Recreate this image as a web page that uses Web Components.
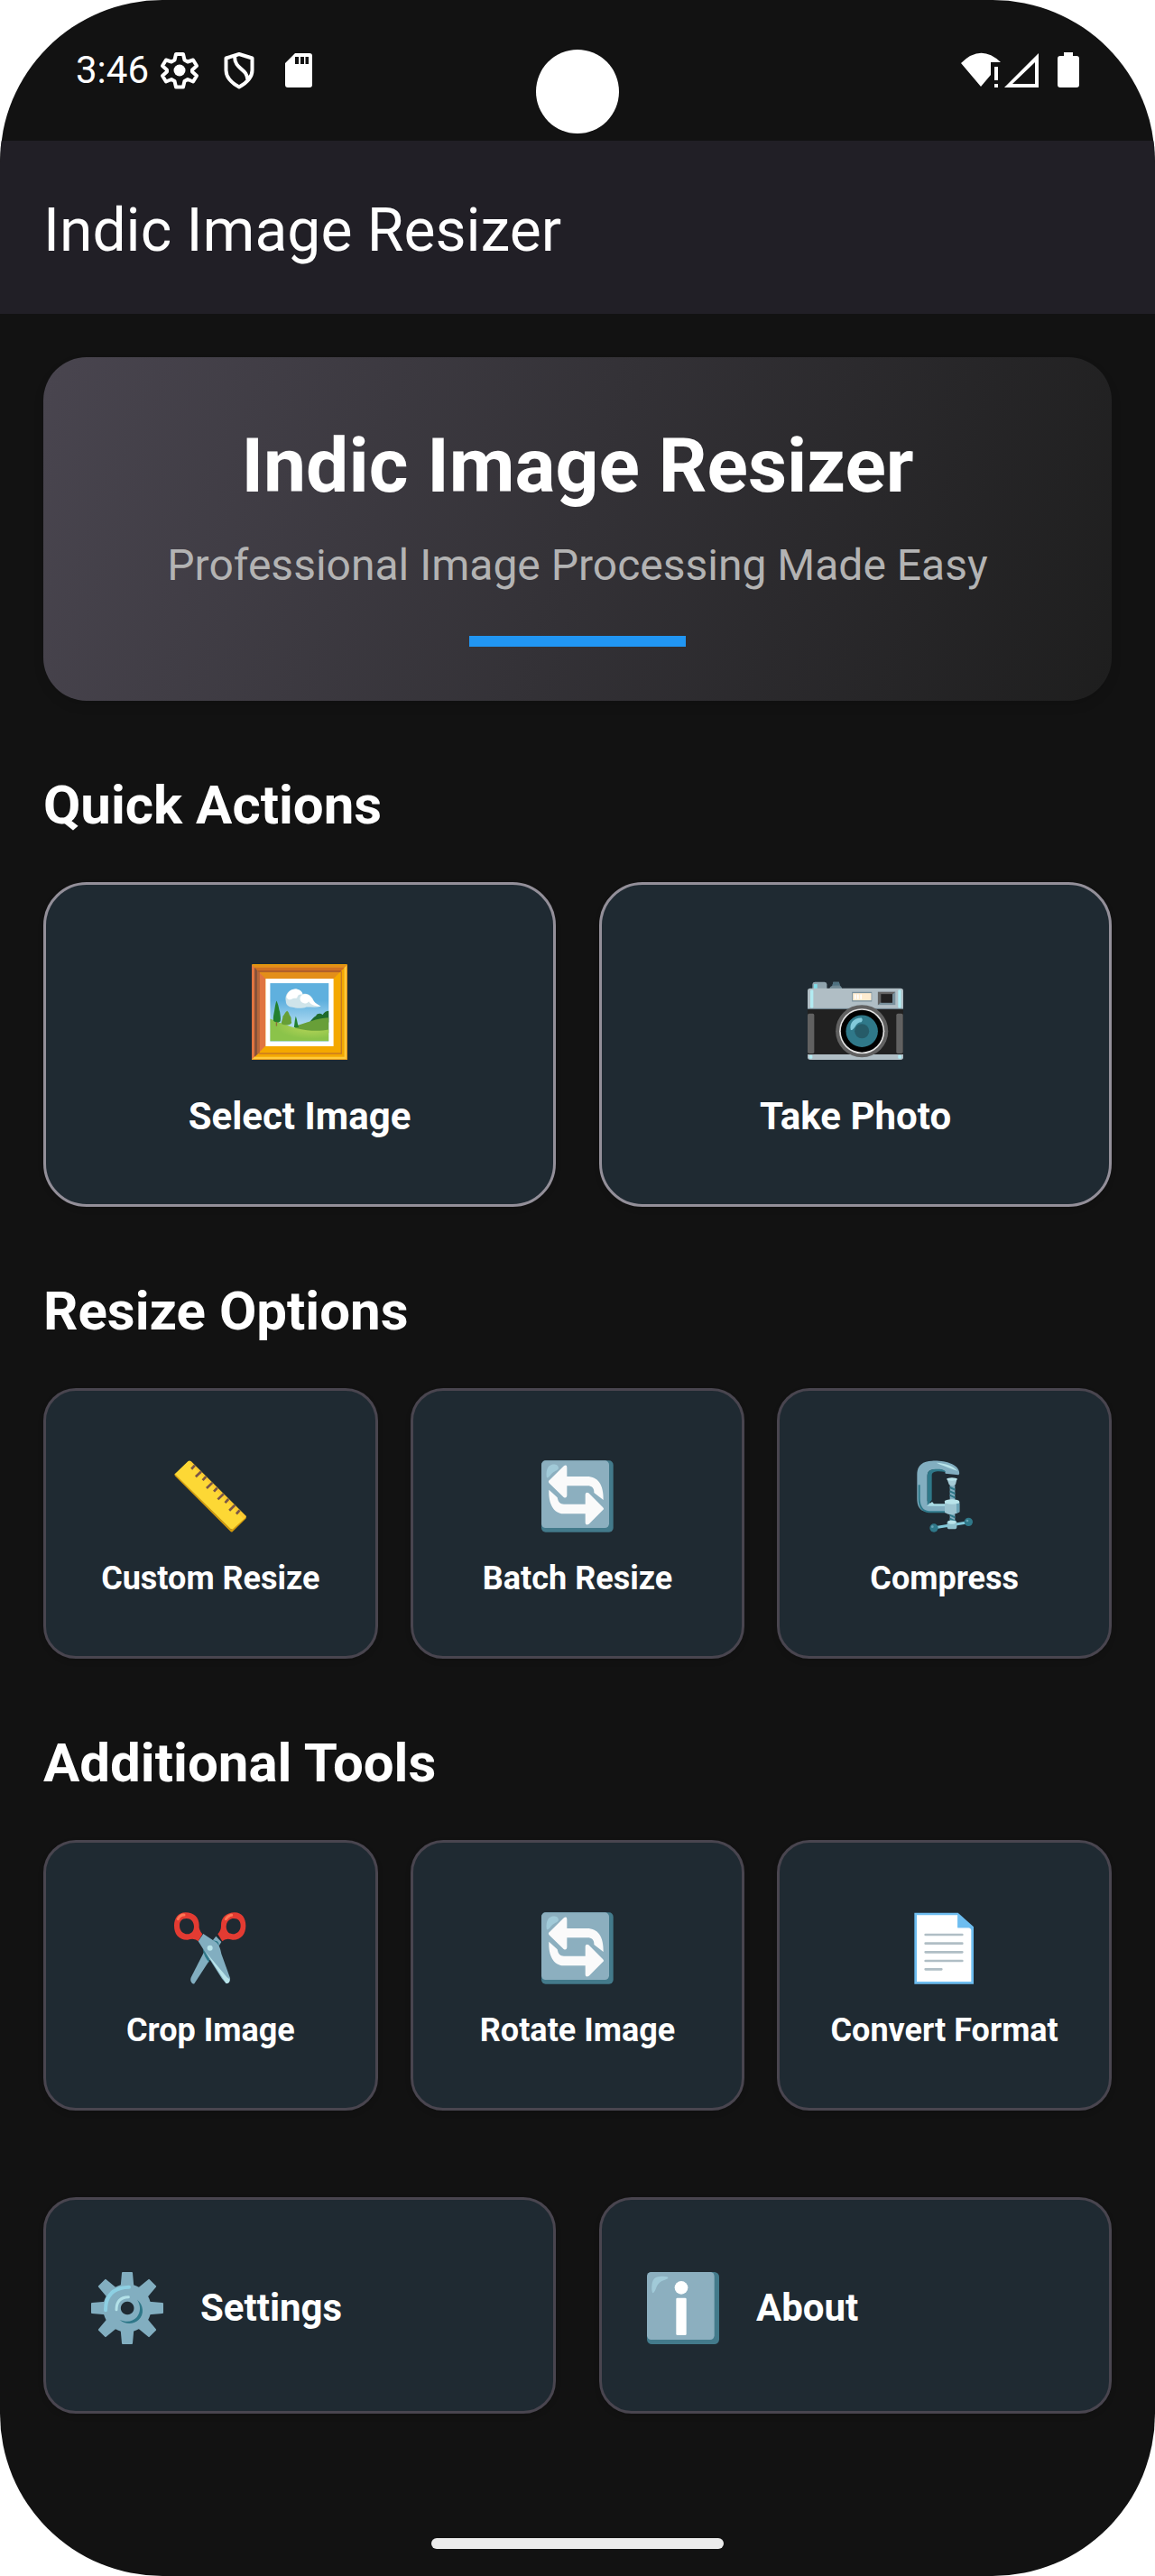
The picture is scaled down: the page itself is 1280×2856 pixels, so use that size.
<!DOCTYPE html>
<html lang="en">
<head>
<meta charset="utf-8">
<meta name="viewport" content="width=device-width, initial-scale=1">
<title>Indic Image Resizer</title>
<style>
  body { margin: 0; background: #fff; font-family: Roboto, "Liberation Sans", sans-serif; color: #fff; }
</style>
</head>
<body>
<phone-screen>
  <status-bar slot="status" time="3:46"></status-bar>
  <app-bar slot="bar">Indic Image Resizer</app-bar>
  <hero-card>
    <span slot="title">Indic Image Resizer</span>
    <span slot="subtitle">Professional Image Processing Made Easy</span>
  </hero-card>
  <tool-section columns="2" heading="Quick Actions">
    <tool-card size="large" icon="picture">Select Image</tool-card>
    <tool-card size="large" icon="camera">Take Photo</tool-card>
  </tool-section>
  <tool-section columns="3" heading="Resize Options">
    <tool-card icon="ruler">Custom Resize</tool-card>
    <tool-card icon="repeat">Batch Resize</tool-card>
    <tool-card icon="clamp">Compress</tool-card>
  </tool-section>
  <tool-section columns="3" heading="Additional Tools">
    <tool-card icon="scissors">Crop Image</tool-card>
    <tool-card icon="repeat">Rotate Image</tool-card>
    <tool-card icon="page">Convert Format</tool-card>
  </tool-section>
  <tool-section columns="2">
    <tool-card size="row" icon="gear">Settings</tool-card>
    <tool-card size="row" icon="info">About</tool-card>
  </tool-section>
</phone-screen>

<script>
const ICONS = {
  picture: `<svg viewBox="57 57 317 317">
    <defs>
      <linearGradient id="sky" x1="0" y1="0" x2="0" y2="1"><stop offset=".3" stop-color="#5fb0de"/><stop offset=".8" stop-color="#bfe3f6"/></linearGradient>
      <radialGradient id="lawn" cx=".7" cy=".3" r=".6"><stop offset="0" stop-color="#bcd759"/><stop offset="1" stop-color="#8bc34a"/></radialGradient>
    </defs>
    <rect x="57" y="57" width="317" height="317" rx="4" fill="#f4a800"/>
    <path d="M57 59H374L328 105H103Z" fill="#e38e19"/>
    <path d="M66 68H364L354 78H76Z" fill="#cf7022"/>
    <path d="M76 78H354L351 83H80Z" fill="#a9592c"/>
    <path d="M57 59L103 105V328L57 374Z" fill="#e07440"/>
    <path d="M66 68L82 84V349L66 365Z" fill="#87523a"/>
    <path d="M75 77L82 84V349L75 356Z" fill="#b5683a"/>
    <path d="M374 59L364 69V364H66L57 374H374Z" fill="#f3a51b"/>
    <path d="M373 59V374H57L66 364H364V69Z" fill="#ffcb3c"/>
    <path d="M372 60V373H58" fill="none" stroke="#e49318" stroke-width="3"/>
    <path d="M354 80V353H80" fill="none" stroke="#c97a22" stroke-width="4"/>
    <rect x="103" y="105" width="225" height="224" fill="#fff"/>
    <rect x="118" y="120" width="194" height="194" fill="url(#sky)"/>
    <path d="M170 180C165 158 180 140 201 139C216 139 224 147 226 156C244 150 258 164 262 178C268 190 280 192 286 197C268 202 250 198 238 199C222 206 200 202 192 200C178 198 171 192 170 180Z" fill="#cfe4ea"/>
    <path d="M172 166C176 146 190 138 204 139C218 142 226 150 225 158C216 155 210 158 208 166C206 174 196 166 191 172C186 176 176 176 172 166Z" fill="#fff"/>
    <path d="M217 174C216 160 228 154 240 157C252 160 258 172 262 179C270 190 280 192 286 197C262 196 250 188 246 180C240 190 220 190 217 174Z" fill="#fff"/>
    <path d="M248 250C256 240 262 232 270 228C274 218 288 220 292 225C296 216 306 212 312 212V250Z" fill="#1f6b2b"/>
    <path d="M200 262C240 252 270 236 312 234V285H200Z" fill="#689f38"/>
    <path d="M118 238C150 250 190 270 240 276C270 280 295 277 312 274V312H118Z" fill="url(#lawn)"/>
    <path d="M139 178C147 195 146 202 150 215C151 225 154 235 152 246C146 252 134 250 129 245C127 235 130 222 132 212C134 198 135 190 139 178Z" fill="#23802f"/>
    <path d="M137 248V262H141V248Z" fill="#8d6e3a"/>
    <path d="M174 212C182 218 180 224 184 228C190 236 186 240 189 250C188 262 160 260 155 254C156 244 160 238 160 230C166 224 166 218 174 212Z" fill="#679f36"/>
    <path d="M203 230C208 242 207 252 213 266L197 266C200 252 199 242 203 230Z" fill="#23802f"/>
  </svg>`,
  camera: `<svg viewBox="45 28 317 317">
    <path d="M61 110V94Q62 87 70 87H101Q109 88 109 95V110Z" fill="#90a4ae"/>
    <path d="M66 94H77V109H66Z" fill="#80deea"/>
    <path d="M117 110Q119 101 127 99L130 87H149L152 98Q158 102 160 110Z" fill="#6d8692"/><path d="M127 99L130 87H149L152 98Z" fill="#4f7180"/>
    <path d="M45 116Q45 108 54 108H353Q362 108 362 116V180H45Z" fill="#b0bec5"/>
    <path d="M45 325H362V337Q362 345 353 345H54Q45 345 45 337Z" fill="#b0bec5"/>
    <rect x="45" y="175" width="317" height="152" fill="#212121"/>
    <rect x="45" y="174" width="317" height="3" fill="#78909c"/>
    <rect x="54" y="113" width="10" height="60" rx="3" fill="#b2ebf2"/><rect x="345" y="113" width="10" height="60" rx="3" fill="#b2ebf2"/>
    <rect x="50" y="329" width="11" height="12" rx="3" fill="#b2ebf2"/><rect x="345" y="329" width="11" height="12" rx="3" fill="#b2ebf2"/>
    <rect x="45" y="192" width="22" height="132" rx="5" fill="#616161"/><rect x="339" y="192" width="22" height="132" rx="5" fill="#616161"/>
    <rect x="192" y="120" width="66" height="32" fill="#78909c"/><rect x="195" y="124" width="61" height="24" fill="#ffecd0"/>
    <path d="M203 128V144M212 128V144M222 128V144" stroke="#fff" stroke-width="5"/>
    <rect x="278" y="120" width="58" height="43" fill="#78909c"/><path d="M278 120H336L326 128H289V153L278 163Z" fill="#616161"/>
    <rect x="288" y="127" width="38" height="29" fill="#212121"/>
    <circle cx="225" cy="250" r="87" fill="#616161"/><circle cx="225" cy="250" r="75" fill="#e4e4e4"/>
    <circle cx="225" cy="250" r="70" fill="#000"/><circle cx="225" cy="250" r="53" fill="#2f7889"/>
    <circle cx="225" cy="250" r="24" fill="#265b68"/>
    <path d="M188 246C182 222 202 204 224 206Q230 213 223 220C205 221 206 235 195 244Q190 248 188 246Z" fill="#82c9da"/>
  </svg>`,
  ruler: `<svg viewBox="40 58 238 238">
    <path d="M42 102L228 286L277 240V250L233 293Q230 296 226 293L43 110Q40 106 42 102Z" fill="#d39a0c"/>
    <path d="M42 103L86 61Q91 57 96 62L275 240Q279 244 275 248L234 284Q229 287 225 283Z" fill="#fdd835"/>
    <path d="M96 62L275 240Q279 244 275 248L270 252L91 66Z" fill="#fbc02d" opacity=".6"/>
    <path d="M108 75L97 87M129 95L111 112M145 112L134 124M166 132L147 150M182 149L171 161M203 169L184 187M219 186L208 198M240 206L222 224M256 223L245 235" stroke="#795548" stroke-width="8"/>
  </svg>`,
  repeat: `<svg viewBox="57 58 240 240">
    <rect x="57" y="59" width="239" height="238" rx="14" fill="#437a8b"/>
    <rect x="57" y="59" width="225" height="224" rx="14" fill="#8cafbf"/>
    <path d="M74 112C72 90 78 76 92 72C104 70 114 74 114 84C112 92 98 94 90 104C84 112 76 122 74 112Z" fill="#a1cad8"/>
    <path d="M81 127L130 78Q142 70 142 82V112H208C246 112 264 140 263 190L232 166C233 150 224 143 210 143H142V176Q140 186 131 181L84 135Q79 130 81 127Z" fill="#fafafa"/>
    <path d="M264 221L215 270Q203 276 203 266V236H130C98 234 80 204 82 156L110 182C113 198 120 204 132 204H203V171Q205 162 214 167L261 214Q265 218 264 221Z" fill="#fafafa"/>
  </svg>`,
  clamp: `<svg viewBox="28 58 240 240">
    <path d="M194 107L150 102C150 92 140 89 125 89C100 88 90 92 90 112V194L106 205H160V229H86C64 226 56 210 56 185V105C56 74 76 60 106 60C150 58 192 72 196 96Q198 104 194 107Z" fill="#82aec0"/>
    <path d="M90 110C90 90 104 87 125 87C140 87 150 91 151 97C130 93 105 92 105 108V190L90 208Z" fill="#2f7889"/>
    <path d="M88 210L106 196L112 203H150V210Z" fill="#a9dbe4"/>
    <path d="M63 140V185C63 212 72 228 95 230H150" fill="none" stroke="#2f7889" stroke-width="6"/>
    <path d="M120 66C150 68 178 76 190 94C174 86 150 80 120 66Z" fill="#b9e4ea"/>
    <path d="M165 140H182V190H165ZM165 230H182V264H165Z" fill="#82aec0"/>
    <path d="M165 148L182 156M165 161L182 169M165 174L182 182M165 240L182 248M165 252L182 260" stroke="#2f7889" stroke-width="6"/>
    <path d="M155 119H189L184 138Q173 148 162 138Z" fill="#a5cbd6"/><ellipse cx="172" cy="121" rx="17" ry="5" fill="#b9e4ea"/>
    <path d="M148 196V232Q172 246 197 230V196Z" fill="#9cc4d0"/><ellipse cx="172" cy="196" rx="25" ry="8" fill="#b9e4ea"/>
    <path d="M187 202H197V230L187 235Z" fill="#6ba3b5"/>
    <path d="M115 282L226 264" stroke="#82c9da" stroke-width="9"/>
    <rect x="156" y="258" width="32" height="29" rx="8" fill="#8fc1cd"/><ellipse cx="172" cy="264" rx="13" ry="6" fill="#b9e4ea"/>
    <circle cx="112" cy="283" r="14" fill="#2f7889"/><circle cx="227" cy="263" r="14" fill="#2f7889"/>
    <circle cx="107" cy="279" r="4" fill="#68a4b5"/><circle cx="223" cy="259" r="4" fill="#68a4b5"/>
  </svg>`,
  scissors: `<svg viewBox="39 61 240 240">
    <path d="M178 141L196 160L190 170L106 299Q100 302 95 292Q92 284 96 276L140 190Z" fill="#82aec0"/>
    <path d="M158 152L182 158Q190 164 187 176L176 168ZM134 182L156 208V228Q138 212 134 182Z" fill="#2f7889"/>
    <path d="M119 158L136 133L180 162Q192 174 196 200L225 280Q227 296 212 299L198 282Z" fill="#82aec0"/>
    <path d="M144 194L212 298Q226 298 223 284L215 278Z" fill="#b9e4ea"/>
    <circle cx="158" cy="180" r="9" fill="#b9e4ea"/>
    <path fill-rule="evenodd" d="M77 62C104 62 122 78 122 104Q120 120 133 134L119 158Q108 146 84 153C54 154 39 134 39 106C39 82 52 62 77 62ZM80 82C64 82 57 92 57 106C57 122 68 134 83 134C98 133 105 122 105 108C104 92 94 82 80 82Z" fill="#e33b32"/>
    <path fill-rule="evenodd" d="M240 62C213 62 195 78 195 104Q196 120 184 134L199 158Q210 146 233 153C262 154 277 134 277 106C277 82 265 62 240 62ZM237 82C253 82 260 92 260 106C260 122 249 134 234 134C219 133 212 122 212 108C213 92 223 82 237 82Z" fill="#e33b32"/>
    <path d="M52 84Q58 70 72 70M211 84Q218 72 230 71" fill="none" stroke="#ff7554" stroke-width="9" stroke-linecap="round"/>
  </svg>`,
  page: `<svg viewBox="20 61 240 240">
    <path d="M39 63H184L236 110V300H39Z" fill="#6dbdf0"/>
    <path d="M47 71H183V113H222Q228 115 228 120V292H47Z" fill="#fff"/>
    <path d="M183 71L190 76L228 112V120Q226 113 220 113H183Z" fill="#6dbdf0"/>
    <path d="M76 136H198M76 165H198M76 194H198M76 223H198M76 251H129" stroke="#b0bec5" stroke-width="8" stroke-linecap="round"/>
  </svg>`,
  gear: `<svg viewBox="0 0 240 240">
    <g fill="#82aec0">
      <path fill-rule="evenodd" d="M120 40A80 80 0 1 1 119 40ZM120 98A22 22 0 1 0 121 98Z"/>
      ${[0,45,90,135,180,225,270,315].map(a => `<path transform="rotate(${a} 120 120)" d="M98 48L102 3Q102 0 105 0H135Q138 0 138 3L142 48Z"/>`).join("")}
    </g>
    <path d="M48 127Q48 52 126 50" fill="none" stroke="#8dd0e3" stroke-width="12" stroke-linecap="round"/>
    <path d="M84 125Q84 84 124 83" fill="none" stroke="#b3e1e8" stroke-width="9" stroke-linecap="round"/>
    <path d="M153 92C174 108 178 140 158 159C140 176 112 174 95 159C116 168 138 166 152 150C166 132 165 110 153 92Z" fill="#2f7889"/>
  </svg>`,
  info: `<svg viewBox="0 0 240 240">
    <rect width="240" height="240" rx="16" fill="#437a8b"/><rect width="224" height="225" rx="14" fill="#8cafbf"/>
    <path d="M16 60C16 26 20 14 54 14Q72 14 70 21C60 28 38 28 30 54Q24 72 18 69Z" fill="#a1cad8"/>
    <circle cx="114" cy="52" r="22" fill="#fff"/><rect x="97" y="86" width="34" height="124" rx="4" fill="#fff"/>
  </svg>`
};

function define(name, render) {
  customElements.define(name, class extends HTMLElement {
    constructor() { super(); this.attachShadow({ mode: "open" }); }
    connectedCallback() { this.shadowRoot.innerHTML = render(this); }
  });
}

define("phone-screen", () => `
  <style>
    :host { display: flex; flex-direction: column; position: relative; min-height: 100vh; box-sizing: border-box; background: #121212; border-radius: 180px; overflow: hidden; }
    main { display: flex; flex-direction: column; flex: 1; padding: 48px 48px 0; }
    .home { align-self: center; width: 324px; height: 12px; margin: 48px 0 30px; border-radius: 6px; background: #ebebeb; }
    .lens { position: absolute; top: 55px; left: calc(50% - 46px); width: 92px; height: 93px; border-radius: 50%; background: #fff; }
  </style>
  <slot name="status"></slot><slot name="bar"></slot>
  <main><slot></slot></main>
  <div class="home"></div><div class="lens"></div>`);

define("status-bar", el => `
  <style>
    :host { display: flex; justify-content: space-between; align-items: center; height: 156px; padding: 0 84px; font-size: 42px; line-height: 50px; }
    .left { display: flex; align-items: center; gap: 20px; }
    time { margin-right: -9px; }
    svg { display: block; }
    .right { display: flex; align-items: center; gap: 4px; }
    .battery { margin-left: 17px; }
  </style>
  <div class="left">
    <time>${el.getAttribute("time")}</time>
    <svg width="46" height="46" viewBox="0 0 46 46"><path d="M19 5H27L28.500 11.500L32 13.500L38 11.500L42 18L37 22.500V24.500L42 29L38 35.500L32 33L28.500 35L27 41.500H19L17.500 35L14 33L8 35.500L4 29L9 24.500V22.500L4 18L8 11.500L14 13.500L17.500 11.500Z" fill="none" stroke="#fff" stroke-width="4" stroke-linejoin="round"/><circle cx="23" cy="23" r="6.500" fill="#fff"/></svg>
    <svg width="46" height="46" viewBox="0 0 46 46"><path d="M23 5L37.500 9.500V23C37.500 31 31 37 23 41.500C15 37 8.500 31 8.500 23V9.500ZM18 7C18 23 32 20 32.500 34M23 5L18 7" fill="none" stroke="#fff" stroke-width="4" stroke-linejoin="round"/></svg>
    <svg width="46" height="46" viewBox="0 0 46 46"><path fill-rule="evenodd" d="M19 4H35Q38 4 38 7V39Q38 42 35 42H11Q8 42 8 39V15ZM19 8V16H23V8ZM25 8V16H29V8ZM30.500 8V16H34V8Z" fill="#fff"/></svg>
  </div>
  <div class="right">
    <svg width="44" height="40" viewBox="0 0 44 40"><path d="M0 12Q22 -10 44 11H33V25L22 38Z" fill="#fff"/><path d="M37 16H41V31H37ZM37 35H41V39H37Z" fill="#fff"/></svg>
    <svg width="38" height="40" viewBox="0 0 38 40"><path fill-rule="evenodd" d="M38 1V39H0ZM34 11L9 35H34Z" fill="#fff"/></svg>
    <svg class="battery" width="24" height="40" viewBox="0 0 24 40"><path d="M7 0H17V4H21Q24 4 24 7V36Q24 39 21 39H3Q0 39 0 36V7Q0 4 3 4H7Z" fill="#fff"/></svg>
  </div>`);

define("app-bar", () => `
  <style>
    :host { display: block; background: #211f26; }
    h1 { margin: 0; padding: 64px 48px 56px; font-size: 66px; font-weight: 400; line-height: 72px; }
  </style>
  <h1><slot></slot></h1>`);

define("hero-card", () => `
  <style>
    :host { display: flex; flex-direction: column; align-items: center; padding: 72px 48px 60px; border-radius: 48px; background: linear-gradient(108deg, #49454f, #1e1e1e); box-shadow: 0 6px 12px rgba(0,0,0,.1); text-align: center; }
    h2, p { margin: 0; }
    h2 { font-size: 84px; line-height: 98px; font-weight: 700; }
    p { margin-top: 33px; font-size: 48px; line-height: 56px; color: #b3b3b3; }
    div { width: 240px; height: 12px; margin-top: 50px; background: #2196f3; }
  </style>
  <h2><slot name="title"></slot></h2>
  <p><slot name="subtitle"></slot></p>
  <div></div>`);

define("tool-section", el => {
  const heading = el.getAttribute("heading");
  const columns = el.getAttribute("columns");
  return `
  <style>
    :host { display: block; }
    h2 { margin: 80px 0 50px; font-size: 60px; line-height: 71px; font-weight: 700; }
    .grid { display: grid; grid-template-columns: repeat(${columns}, minmax(0, 1fr)); gap: ${columns === "2" ? 48 : 36}px; }
    .plain { margin-top: 96px; }
  </style>
  ${heading ? `<h2>${heading}</h2>` : ""}
  <div class="grid ${heading ? "" : "plain"}"><slot></slot></div>`;
});

define("tool-card", el => `
  <style>
    :host { display: block; }
    button { display: flex; flex-direction: column; align-items: center; gap: 30px; box-sizing: border-box; width: 100%; height: 300px; margin: 0; padding: 77px 0 0; border: 3px solid #49454f; border-radius: 36px; background: #1f2a32; box-shadow: 0 3px 6px rgba(0,0,0,.12); color: inherit; font: 700 36px/42px Roboto, "Liberation Sans", sans-serif; }
    svg { display: block; flex: none; width: 80px; height: 80px; }
    :host([size="large"]) button { height: 360px; padding-top: 88px; gap: 38px; border-color: #938f99; border-radius: 48px; font-size: 42px; line-height: 50px; }
    :host([size="large"]) svg { width: 106px; height: 106px; }
    :host([size="row"]) button { flex-direction: row; height: 240px; padding: 6px 50px 0; gap: 41px; font-size: 42px; line-height: 50px; }
  </style>
  <button type="button">${ICONS[el.getAttribute("icon")]}<span><slot></slot></span></button>`);
</script>
</body>
</html>
